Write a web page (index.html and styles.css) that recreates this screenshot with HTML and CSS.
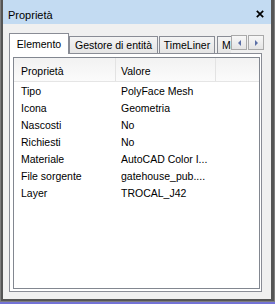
FILE: index.html
```html
<!DOCTYPE html>
<html lang="it">
<head>
  <meta charset="UTF-8">
  <meta name="viewport" content="width=device-width, initial-scale=1.0">
  <title>Proprietà</title>
  <link rel="stylesheet" href="styles.css">
</head>
<body>

<div class="window">
  <div class="frame">
    <div class="titlebar">
      <span class="title">Proprietà</span>
      <svg class="close-btn" width="8" height="8" viewBox="0 0 8 8">
        <path d="M0.8 0.8 L7.2 7.2 M7.2 0.8 L0.8 7.2" stroke="#000" stroke-width="1.7" fill="none"/>
      </svg>
    </div>

    <!-- Schede -->
    <div class="tabstrip">
      <div class="tabs">
        <div class="tab active">Elemento</div>
        <div class="tab tab-gestore">Gestore di entità</div>
        <div class="tab tab-timeliner">TimeLiner</div>
        <div class="tab tab-more">Materiali</div>
      </div>
      <div class="scroller">
        <div class="scroll-btn"><span class="arrow-left"></span></div>
        <div class="scroll-btn"><span class="arrow-right"></span></div>
      </div>
    </div>

    <div class="panel">
      <div class="list">
        <div class="list-header">
          <div class="cell">Proprietà</div>
          <div class="cell">Valore</div>
          <div class="cell"></div>
        </div>
        <div class="list-body">
          <div class="row"><div class="cell">Tipo</div><div class="cell">PolyFace Mesh</div></div>
          <div class="row"><div class="cell">Icona</div><div class="cell">Geometria</div></div>
          <div class="row"><div class="cell">Nascosti</div><div class="cell">No</div></div>
          <div class="row"><div class="cell">Richiesti</div><div class="cell">No</div></div>
          <div class="row"><div class="cell">Materiale</div><div class="cell">AutoCAD Color I...</div></div>
          <div class="row"><div class="cell">File sorgente</div><div class="cell">gatehouse_pub....</div></div>
          <div class="row"><div class="cell">Layer</div><div class="cell">TROCAL_J42</div></div>
        </div>
      </div>
    </div>
  </div>
</div>
<div class="edge"></div>

</body>
</html>
```

FILE: styles.css
```css
* {
  box-sizing: border-box;
  margin: 0;
  padding: 0;
}

body {
  width: 275px;
  height: 304px;
  overflow: hidden;
  font-family: "Liberation Sans", Arial, sans-serif;
  font-size: 10.5px;
  color: #000;
  background-color: #f0f0f0;
}

.window {
  height: 302px;
  border: solid #7e7e7e;
  border-width: 0 1px 1px 1px;
}

.frame {
  height: 100%;
  border: solid #555;
  border-width: 0 3px 2px 2px;
  background-color: #f0f0f0;
  display: flex;
  flex-direction: column;
}

.titlebar {
  height: 24px;
  flex-shrink: 0;
  background-color: #c3dbf2;
  padding: 6px 7px 0 5px;
  display: flex;
  justify-content: space-between;
  align-items: flex-start;
}

.title {
  font-size: 11px;
  line-height: 18px;
}

.close-btn {
  margin-top: 4px;
}

/* Schede */
.tabstrip {
  height: 30px;
  flex-shrink: 0;
  margin-bottom: -1px;
  padding: 0 7px 0 6px;
  display: flex;
  position: relative;
  z-index: 1;
}

.tabs {
  flex: 1;
  overflow: hidden;
  display: flex;
  align-items: flex-end;
}

.tab {
  flex-shrink: 0;
  height: 18px;
  line-height: 16px;
  text-align: center;
  white-space: nowrap;
  border: 1px solid #898c95;
  background: linear-gradient(#f4f4f4, #e5e5e5);
}

.tab.active {
  width: 60px;
  height: 21px;
  line-height: 20px;
  border-bottom: none;
  background: #fff;
}

.tab-gestore {
  width: 89px;
}

.tab-timeliner {
  width: 56px;
  margin-left: 1px;
}

.tab-more {
  width: 70px;
  margin-left: 2px;
  text-align: left;
  padding-left: 4px;
}

.scroller {
  width: 33px;
  height: 15px;
  margin-top: 11px;
  display: flex;
  gap: 1px;
}

.scroll-btn {
  flex: 1;
  border: 1px solid #a9a9a9;
  background: linear-gradient(#f7f7f7, #e4e4e4);
  display: flex;
  justify-content: center;
  align-items: center;
}

.arrow-left {
  border-top: 3px solid transparent;
  border-bottom: 3px solid transparent;
  border-right: 3px solid #5b6fa6;
}

.arrow-right {
  border-top: 3px solid transparent;
  border-bottom: 3px solid transparent;
  border-left: 3px solid #5b6fa6;
}

/* Pannello */
.panel {
  width: 253px;
  height: 239px;
  margin-left: 6px;
  flex-shrink: 0;
  border: 1px solid #898c95;
  background-color: #fff;
  padding: 3px 1px 2px 3px;
}

.list {
  height: 100%;
  border: 1px solid #828790;
}

.list-header,
.row {
  display: grid;
  grid-template-columns: 102px 100px 1fr;
}

.list-header {
  height: 24px;
  border-bottom: 1px solid #e5e5e5;
  background: linear-gradient(#f2f2f2, #fbfbfb);
}

.list-header .cell {
  padding-top: 4px;
  line-height: 19px;
}

.list-header .cell:nth-child(1),
.list-header .cell:nth-child(2) {
  border-right: 1px solid #e3e3e3;
}

.cell:nth-child(1) {
  padding-left: 7px;
}

.cell:nth-child(2) {
  padding-left: 5px;
  white-space: nowrap;
}

.list-body {
  padding-top: 1px;
}

.row {
  line-height: 17px;
}

.edge {
  height: 2px;
  background-color: #7373d6;
}
```
